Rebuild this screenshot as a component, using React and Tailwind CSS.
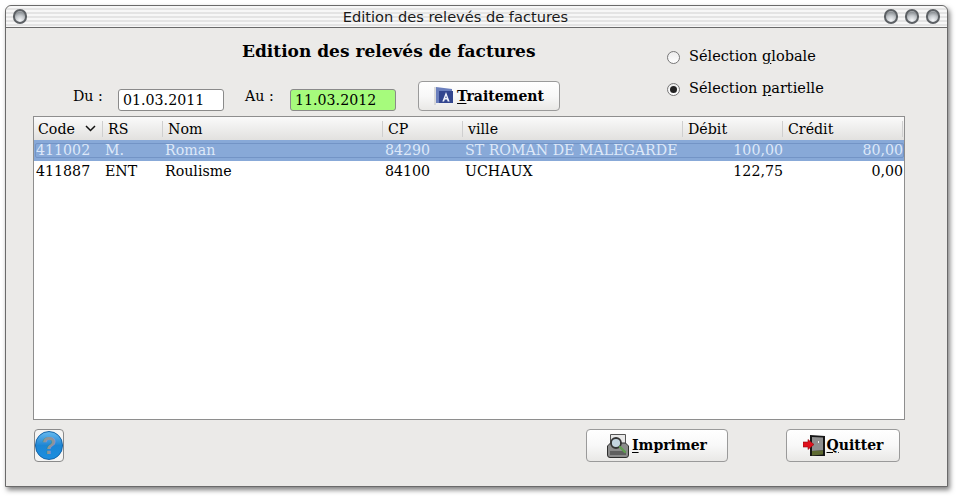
import React from "react";

const serif = "font-['DejaVu_Serif',serif]";

const columns = [
  { label: "Code", width: "w-[69px]" },
  { label: "RS", width: "w-[60px]" },
  { label: "Nom", width: "w-[220px]" },
  { label: "CP", width: "w-[80px]" },
  { label: "ville", width: "w-[220px]" },
  { label: "Débit", width: "w-[100px]" },
  { label: "Crédit", width: "w-[120px]" },
];

const rows = [
  { code: "411002", rs: "M.", nom: "Roman", cp: "84290", ville: "ST ROMAN DE MALEGARDE", debit: "100,00", credit: "80,00" },
  { code: "411887", rs: "ENT", nom: "Roulisme", cp: "84100", ville: "UCHAUX", debit: "122,75", credit: "0,00" },
];

const Orb = () => (
  <span className="block w-[14px] h-[15px] rounded-full border-2 border-[#5c6064] bg-[radial-gradient(circle_at_50%_85%,#f6f8fa_0%,#c4c8cc_45%,#8f9498_75%,#cfd2d5_100%)]" />
);

const FlagIcon = () => (
  <svg width="20" height="18" viewBox="0 0 20 18" className="shrink-0">
    <path d="M1 0v18" stroke="#d0d0d0" strokeWidth="1.500" />
    <path d="M2 0l16 2v14H2z" fill="#6b7fbd" />
    <rect x="5" y="4" width="14" height="12" fill="#33468f" />
    <path d="M12 5l3.600 9.500h-1.900l-.7-2h-2.200l-.7 2H8.300zM11.300 11h1.400L12 8.700z" fill="#f2f4fc" />
  </svg>
);

const PrintIcon = () => (
  <svg width="22" height="24" viewBox="0 0 22 24" className="shrink-0">
    <path d="M3.500.5h15v12h-15z" fill="#e8e8e8" stroke="#555" />
    <path d="M.5 12l3-3h15l3 3v9a2.500 2.500 0 0 1-2.500 2.500H3A2.500 2.500 0 0 1 .5 21z" fill="#8b8b8b" stroke="#2e2e2e" />
    <rect x="3" y="17" width="16" height="4" fill="#5f5f5f" />
    <circle cx="9" cy="9" r="5" fill="#c3d4df" stroke="#333" strokeWidth="1.800" />
    <path d="M13 13l5 5" stroke="#5f9e4f" strokeWidth="2.400" strokeLinecap="round" />
  </svg>
);

const DoorIcon = () => (
  <svg width="22" height="22" viewBox="0 0 22 22" className="shrink-0">
    <path d="M7 0l15 1v20H7z" fill="#161616" />
    <path d="M9 2l11 .5v13L9 16z" fill="#8f8f8f" />
    <path d="M9 16l11-.5v4L9 20.500z" fill="#5e6a32" />
    <path d="M15 6h1v2h-1z" fill="#eee" />
    <path d="M0 7h5V4.500L11 9.500 5 14.500V12H0z" fill="#e0101c" stroke="#8e0a10" strokeWidth="0.600" />
  </svg>
);

const HelpIcon = () => (
  <span className="flex items-center justify-center w-[28px] h-[29px] rounded-full bg-gradient-to-b from-[#63b8ee] via-[#1c86d4] to-[#1a8ee0] border border-[#1464a8]">
    <span className="font-['Liberation_Sans',sans-serif] font-bold text-[24px] leading-none text-[#8e949a]">?</span>
  </span>
);

const Button = ({ width, height, icon, first, rest, gap = "gap-[3px]" }) => (
  <button
    className={`${width} ${height} flex items-center justify-center ${gap} rounded-[4px] border border-[#9a9a9a] bg-gradient-to-b from-white via-[#f8f8f8] to-[#e9e8e6] font-bold text-[14px] text-black ${serif}`}
  >
    {icon}
    <span>
      <span className="underline underline-offset-2">{first}</span>
      {rest}
    </span>
  </button>
);

const DateField = ({ value, className }) => (
  <div className={`w-[106px] h-[22px] pl-[4px] pt-[1px] flex items-center rounded-[3px] border border-[#8a8a8a] text-[14.2px] ${className}`}>
    {value}
  </div>
);

const Radio = ({ checked, first, before, rest }) => (
  <label className="flex items-center gap-[9px] h-[20px] text-[14.5px]">
    <span className="flex items-center justify-center w-[13px] h-[13px] rounded-full border border-[#777] bg-gradient-to-b from-[#ececec] to-white">
      {checked && <span className="w-[7px] h-[7px] rounded-full bg-[#222]" />}
    </span>
    <span>
      {before}
      <span className="underline underline-offset-2">{first}</span>
      {rest}
    </span>
  </label>
);

const Row = ({ row, selected }) => {
  return (
    <div className={`flex items-center ${selected ? "h-[21px] bg-[#88a9d8] text-[#dde8f8]" : "h-[20px] bg-white text-black"}`}>
      <div className={`flex items-center h-[15px] pt-[1px] w-[869px] ml-[1px] rounded-[2px] ${selected ? "outline outline-1 -outline-offset-1 outline-[#7394c6]" : ""}`}>
        <div className="w-[70px] pl-[1px]">{row.code}</div>
        <div className="w-[60px]">{row.rs}</div>
        <div className="w-[220px]">{row.nom}</div>
        <div className="w-[80px]">{row.cp}</div>
        <div className="w-[218px] whitespace-nowrap">{row.ville}</div>
        <div className="w-[100px] text-right">{row.debit}</div>
        <div className="w-[120px] text-right">{row.credit}</div>
      </div>
    </div>
  );
};

const App = () => {
  return (
    <div className="w-[958px] h-[497px] bg-white pt-[5px] pl-[5px] overflow-hidden">
      <div className={`w-[943px] h-[482px] flex flex-col rounded-t-[6px] border border-[#6a6a6a] bg-[#ebeae8] shadow-[2px_3px_5px_rgba(0,0,0,0.5)] text-[14.2px] text-black ${serif}`}>
        {/* barre de titre */}
        <div className="h-[22px] shrink-0 flex items-center justify-between px-[7px] rounded-t-[6px] border-b border-[#6a6a6a] bg-[repeating-linear-gradient(180deg,#f7f7f7_0px,#f7f7f7_2px,#e4e4e4_2px,#e4e4e4_4px)]">
          <Orb />
          <span className="font-['DejaVu_Sans',sans-serif] text-[14.6px] text-[#1a1a1a]">Edition des relevés de factures</span>
          <div className="flex gap-[7px]">
            <Orb />
            <Orb />
            <Orb />
          </div>
        </div>

        {/* entete */}
        <div className="flex h-[88px] shrink-0">
          <div className="w-[660px] pl-[67px]">
            <h1 className="mt-[11px] ml-[169px] font-bold text-[17px] leading-[24px] whitespace-nowrap">Edition des relevés de factures</h1>
            <div className="flex items-start mt-[18px]">
              <span className="mt-[5px] w-[45px] whitespace-nowrap">Du :</span>
              <DateField value="01.03.2011" className="mt-[8px] bg-white" />
              <span className="mt-[5px] ml-[21px] w-[45px] whitespace-nowrap">Au :</span>
              <DateField value="11.03.2012" className="mt-[8px] bg-[#a6fb7c]" />
              <div className="ml-[22px]">
                <Button width="w-[142px]" height="h-[30px]" icon={<FlagIcon />} first="T" rest="raitement" />
              </div>
            </div>
          </div>
          <div className="flex flex-col gap-[12px] pt-[19px] pl-[1px]">
            <Radio before="Sélection " first="g" rest="lobale" />
            <Radio checked before="Sélection " first="p" rest="artielle" />
          </div>
        </div>

        {/* tableau */}
        <div className="ml-[27px] w-[872px] h-[304px] shrink-0 border border-[#8e8e8e] bg-white">
          <div className="flex h-[23px] bg-gradient-to-b from-[#fafafa] to-[#e2e1df]">
            {columns.map((col, i) => (
              <div key={col.label} className={`${col.width} flex items-center pt-[2px] ${i === 0 ? "pl-[4px]" : "pl-[5px]"} relative`}>
                <span>{col.label}</span>
                {i === 0 && (
                  <svg width="11" height="7" viewBox="0 0 11 7" className="ml-[10px] mb-[3px]">
                    <path d="M1 1l4.500 4.500L10 1" fill="none" stroke="#111" strokeWidth="1.500" />
                  </svg>
                )}
                <span className="absolute right-0 top-[4px] h-[16px] w-px bg-[#cfcfcf]" />
              </div>
            ))}
          </div>
          {rows.map((row, i) => (
            <Row key={row.code} row={row} selected={i === 0} />
          ))}
        </div>

        {/* boutons */}
        <div className="flex items-start mt-[9px] ml-[28px]">
          <button className="flex items-center justify-center w-[30px] h-[33px] rounded-[4px] border border-[#8a8a8a] bg-[#f4f4f3]">
            <HelpIcon />
          </button>
          <div className="ml-[522px]">
            <Button width="w-[142px]" height="h-[33px]" icon={<PrintIcon />} first="I" rest="mprimer" />
          </div>
          <div className="ml-[58px]">
            <Button width="w-[114px]" height="h-[33px]" gap="gap-[2px]" icon={<DoorIcon />} first="Q" rest="uitter" />
          </div>
        </div>
      </div>
    </div>
  );
};

export default App;
